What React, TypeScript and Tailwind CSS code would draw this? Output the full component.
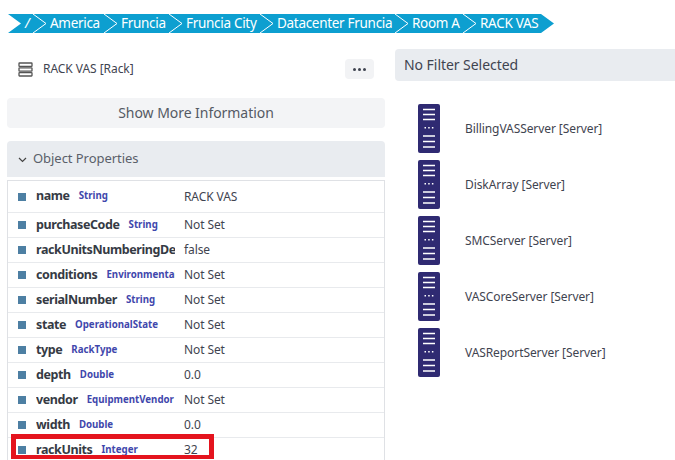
const crumbs = [
  { label: "/", w: "w-[5px]" },
  { label: "America", w: "w-[51px]" },
  { label: "Fruncia", w: "w-[45px]" },
  { label: "Fruncia City", w: "w-[71px]" },
  { label: "Datacenter Fruncia", w: "w-[115px]" },
  { label: "Room A", w: "w-[48px]" },
  { label: "RACK VAS", w: "w-[60px]" },
];

const props = [
  { name: "name", type: "String", value: "RACK VAS", h: "h-[32px]" },
  { name: "purchaseCode", type: "String", value: "Not Set", h: "h-[25px]" },
  { name: "rackUnitsNumberingDescending", type: "", value: "false", h: "h-[25px]" },
  { name: "conditions", type: "EnvironmentalConditions", value: "Not Set", h: "h-[25px]" },
  { name: "serialNumber", type: "String", value: "Not Set", h: "h-[25px]" },
  { name: "state", type: "OperationalState", value: "Not Set", h: "h-[25px]" },
  { name: "type", type: "RackType", value: "Not Set", h: "h-[25px]" },
  { name: "depth", type: "Double", value: "0.0", h: "h-[25px]" },
  { name: "vendor", type: "EquipmentVendor", value: "Not Set", h: "h-[25px]" },
  { name: "width", type: "Double", value: "0.0", h: "h-[25px]" },
  { name: "rackUnits", type: "Integer", value: "32", h: "h-[25px]" },
];

const servers = ["BillingVASServer", "DiskArray", "SMCServer", "VASCoreServer", "VASReportServer"];

function ServerIcon() {
  return (
    <svg width="22" height="49" viewBox="0 0 22 49" className="shrink-0">
      <rect width="22" height="49" rx="2" fill="#2f2a72" />
      <g stroke="#fff" strokeWidth="1.4">
        <path d="M5 5.5h12M5 10.5h12M5 15.5h12M5 32h12M5 37.5h12M5 43h12" />
      </g>
      <g fill="#fff">
        <rect x="6.5" y="23" width="1.5" height="1.5" />
        <rect x="10.2" y="23" width="1.5" height="1.5" />
        <rect x="13.9" y="23" width="1.5" height="1.5" />
      </g>
    </svg>
  );
}

function RackIcon() {
  return (
    <svg width="15" height="15" viewBox="0 0 15 15" className="shrink-0">
      <g fill="none" stroke="#555" strokeWidth="1.3">
        <rect x="1" y="1" width="13" height="3.4" rx="0.5" />
        <rect x="1" y="5.8" width="13" height="3.4" rx="0.5" />
        <rect x="1" y="10.6" width="13" height="3.4" rx="0.5" />
      </g>
    </svg>
  );
}

function Separator() {
  return (
    <svg width="20" height="19" viewBox="0 0 20 19" className="shrink-0">
      <path d="M3 0l13 9.5L3 19" fill="none" stroke="#fff" strokeWidth="1" />
    </svg>
  );
}

export default function App() {
  return (
    <div className="h-[460px] w-[675px] overflow-hidden bg-white font-['Noto_Sans',sans-serif] text-[#3f4450]">
      <nav className="ml-2 mt-[14px] flex h-[19px] w-[546px] items-center bg-[#0d9fd0] text-[13.5px] leading-[19px] tracking-[-0.3px] text-white [clip-path:polygon(0_0,calc(100%-13px)_0,100%_50%,calc(100%-13px)_100%,0_100%,13px_50%)]">
        <span className="w-[17px] shrink-0" />
        {crumbs.map((crumb, i) => (
          <div key={crumb.label} className="flex items-center">
            {i > 0 && <Separator />}
            <span className={`${crumb.w} whitespace-nowrap ${i === 0 ? "italic" : ""}`}>{crumb.label}</span>
          </div>
        ))}
      </nav>

      <div className="mt-4 flex gap-[10px]">
        <section className="w-[385px] shrink-0 pl-[7px]">
          <div className="flex h-[40px] items-center pl-[11px] pr-[11px]">
            <RackIcon />
            <span className="ml-[10px] text-[12px] tracking-[-0.05px]">RACK VAS [Rack]</span>
            <button className="ml-auto flex h-5 w-[29px] items-center justify-center gap-[2px] rounded bg-[#f2f3f5]">
              <span className="h-[3px] w-[3px] rounded-full bg-[#3f4450]" />
              <span className="h-[3px] w-[3px] rounded-full bg-[#3f4450]" />
              <span className="h-[3px] w-[3px] rounded-full bg-[#3f4450]" />
            </button>
          </div>

          <div className="mt-[9px] flex h-[30px] items-center justify-center rounded bg-[#f3f4f6] pb-[2px] text-[14px] tracking-[-0.05px] text-[#555a64]">
            Show More Information
          </div>

          <div className="mt-[13px] flex h-[36px] items-center rounded-t bg-[#e9ecf0] pl-[10px] text-[13px] tracking-[-0.05px] text-[#5a5f6a]">
            <svg width="11" height="11" viewBox="0 0 11 11" className="mr-[5px]">
              <path d="M2 4l3.5 3.5L9 4" fill="none" stroke="#444" strokeWidth="1.2" />
            </svg>
            Object Properties
          </div>

          <div className="relative mt-[3px] border-x border-t border-[#dfe1e5]">
            {props.map((p) => (
              <div key={p.name} className={`flex items-center border-b border-[#e8eaed] ${p.h}`}>
                <span className="ml-[10px] h-2 w-2 shrink-0 bg-[#4d7fa3]" />
                <div className="ml-[10px] flex w-[139px] items-center overflow-hidden whitespace-nowrap">
                  <span className="text-[12.5px] font-bold tracking-[-0.4px] text-[#353a44]">{p.name}</span>
                  {p.type && (
                    <span className="ml-[9px] text-[9.7px] font-bold text-[#3f47ac]">{p.type}</span>
                  )}
                </div>
                <span className="ml-[9px] text-[12px] tracking-[-0.1px]">{p.value}</span>
              </div>
            ))}
            <div className="absolute bottom-[4px] left-[3px] h-[25px] w-[203px] border-x-[5px] border-t-[5px] border-b-[4px] border-[#e4141e]" />
          </div>
        </section>

        <section className="flex-1">
          <div className="flex h-[32px] items-center rounded-l bg-[#e9ecf0] pb-[2px] pl-[9px] text-[14px] tracking-[-0.05px]">
            No Filter Selected
          </div>
          <div className="ml-[23px] mt-[23px] flex flex-col gap-[7px]">
            {servers.map((s) => (
              <div key={s} className="flex items-center">
                <ServerIcon />
                <span className="ml-[25px] text-[12px] tracking-[-0.08px]">{s} [Server]</span>
              </div>
            ))}
          </div>
        </section>
      </div>
    </div>
  );
}
